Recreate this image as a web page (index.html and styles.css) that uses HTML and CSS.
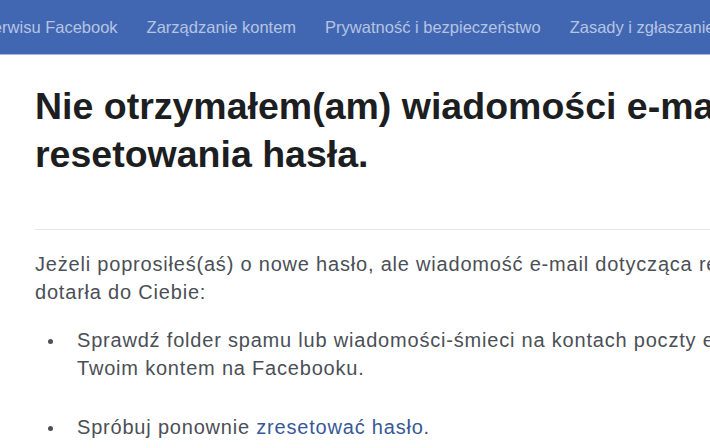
FILE: index.html
```html
<!DOCTYPE html>
<html lang="pl">
<head>
  <meta charset="UTF-8" />
  <meta name="viewport" content="width=device-width, initial-scale=1.0"/>
  <title>Nie otrzymałem(am) wiadomości e-mail dotyczącej resetowania hasła</title>
  <link rel="stylesheet" href="styles.css">
</head>
<body>

  <div class="topnav">
    <ul class="topnav-list">
      <li><a href="#">Korzystanie z serwisu Facebook</a></li>
      <li><a href="#">Zarządzanie kontem</a></li>
      <li><a href="#">Prywatność i bezpieczeństwo</a></li>
      <li><a href="#">Zasady i zgłaszanie</a></li>
    </ul>
  </div>

  <div class="article">
    <h1 class="article-title">Nie otrzymałem(am) wiadomości e-mail dotyczącej resetowania hasła.</h1>

    <div class="article-body">
      <p>Jeżeli poprosiłeś(aś) o nowe hasło, ale wiadomość e-mail dotycząca resetowania hasła nie dotarła do Ciebie:</p>
      <ul>
        <li>Sprawdź folder spamu lub wiadomości-śmieci na kontach poczty e-mail powiązanych z Twoim kontem na Facebooku.</li>
        <li>Spróbuj ponownie <a href="#">zresetować hasło</a>.</li>
      </ul>
    </div>
  </div>

</body>
</html>
```

FILE: styles.css
```css
body {
  margin: 0;
  background: #ffffff;
  font-family: 'Liberation Sans', Arial, sans-serif;
  overflow: hidden;
}
.topnav {
  background: #4267b2;
  border-bottom: 1px solid #a3b6dd;
  height: 54px;
  overflow: hidden;
}
.topnav-list {
  list-style: none;
  margin: 0 0 0 -119px;
  padding: 0;
  display: flex;
  gap: 29px;
  white-space: nowrap;
  height: 100%;
  align-items: center;
}
.topnav-list a {
  color: #b5c4e3;
  text-decoration: none;
  font-size: 16.5px;
}
.article {
  width: 1100px;
  padding: 27px 0 0 35px;
}
.article-title {
  margin: 0;
  font-size: 37.5px;
  line-height: 48px;
  font-weight: bold;
  color: #1c1e21;
  width: 970px;
  padding-bottom: 51px;
  border-bottom: 1px solid #e4e6eb;
}
.article-body {
  width: 900px;
  padding-top: 20px;
  font-size: 20px;
  letter-spacing: 0.8px;
  line-height: 28px;
  color: #4b4f56;
}
.article-body p {
  margin: 0 0 20px;
}
.article-body ul {
  margin: 0;
  padding-left: 42px;
  list-style: none;
}
.article-body li {
  margin-bottom: 31px;
}
.article-body li::before {
  content: "";
  display: inline-block;
  width: 5px;
  height: 5px;
  border-radius: 50%;
  background: #4b4f56;
  margin-left: -29px;
  margin-right: 24px;
  vertical-align: middle;
}
.article-body a {
  color: #385898;
  text-decoration: none;
}
```
